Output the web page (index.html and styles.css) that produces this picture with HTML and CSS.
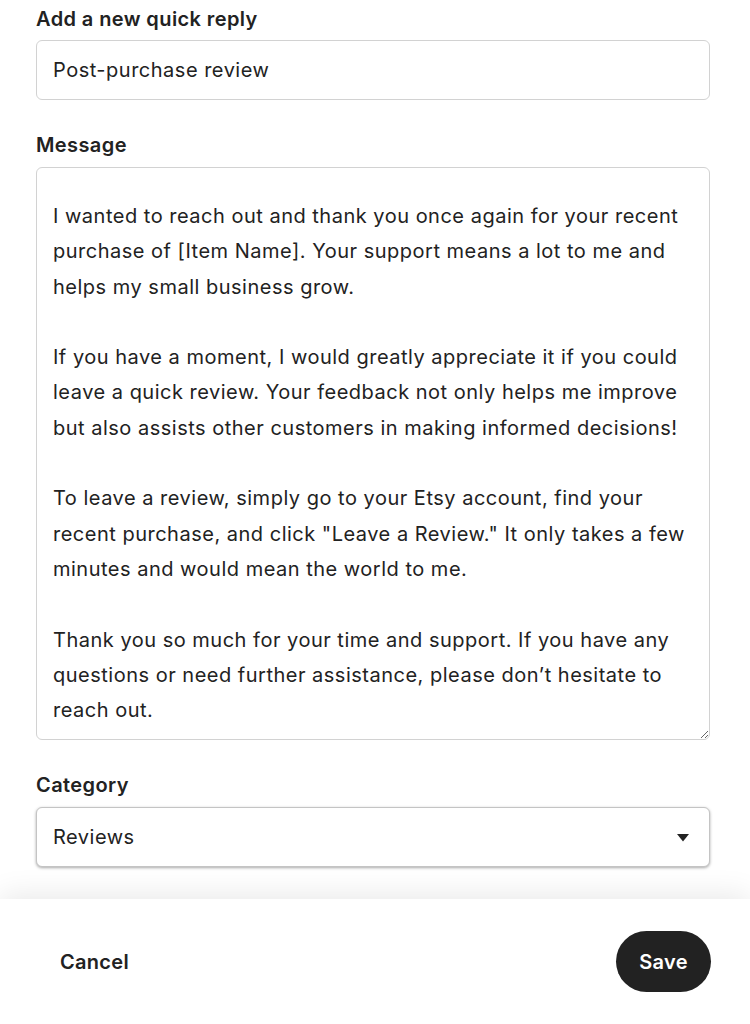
FILE: index.html
```html
<!DOCTYPE html>
<html lang="en">
<head>
<meta charset="utf-8">
<title>Add a new quick reply</title>
<link rel="stylesheet" href="styles.css">
</head>
<body>
<main class="form">
  <label class="label" for="title">Add a new quick reply</label>
  <input class="field" id="title" type="text" value="Post-purchase review">

  <label class="label label-gap" for="msg">Message</label>
  <textarea class="field area" id="msg">I wanted to reach out and thank you once again for your recent purchase of [Item Name]. Your support means a lot to me and helps my small business grow.

If you have a moment, I would greatly appreciate it if you could leave a quick review. Your feedback not only helps me improve but also assists other customers in making informed decisions!

To leave a review, simply go to your Etsy account, find your recent purchase, and click "Leave a Review." It only takes a few minutes and would mean the world to me.

Thank you so much for your time and support. If you have any questions or need further assistance, please don’t hesitate to reach out.</textarea>

  <label class="label label-gap" for="cat">Category</label>
  <div class="select-wrap">
    <select class="field select" id="cat">
      <option>Reviews</option>
    </select>
    <svg class="caret" width="12" height="8" viewBox="0 0 12 8" aria-hidden="true"><path d="M0 0h12L6 7.5z" fill="#222"/></svg>
  </div>
</main>
<footer class="footer">
  <button class="btn btn-text" type="button">Cancel</button>
  <button class="btn btn-primary" type="button">Save</button>
</footer>
</body>
</html>
```
FILE: styles.css
```css
* { box-sizing: border-box; }
html, body { margin: 0; padding: 0; background: #fff; }
body {
  font-family: Inter, "Noto Sans", Arial, sans-serif;
  color: #222;
  width: 750px;
  height: 1024px;
  display: flex;
  flex-direction: column;
  overflow: hidden;
}
.form {
  flex: 1;
  display: flex;
  flex-direction: column;
  padding: 7px 40px 0 36px;
}
.label {
  display: block;
  font-size: 20px;
  line-height: 24px;
  font-weight: 600;
  letter-spacing: 0.4px;
  margin-bottom: 9px;
}
.label-gap { margin-top: 33px; margin-bottom: 10px; }
.field {
  font-family: inherit;
  font-size: 20px;
  letter-spacing: 0.5px;
  color: #222;
  width: 100%;
  background: #fff;
  border: 1px solid #d2d2d2;
  border-radius: 6px;
  outline: none;
}
input.field {
  height: 60px;
  padding: 0 16px;
}
.area {
  height: 573px;
  padding: 31px 16px 12px;
  line-height: 35.3px;
  resize: vertical;
  overflow: hidden;
}
.select-wrap { position: relative; }
.select {
  appearance: none;
  -webkit-appearance: none;
  height: 60px;
  padding: 0 16px;
  border-color: #c4c4c4;
  box-shadow: 0 1px 3px rgba(0,0,0,0.34);
}
.caret {
  position: absolute;
  right: 21px;
  top: 27px;
}
.footer {
  height: 125px;
  flex: none;
  display: flex;
  align-items: center;
  justify-content: space-between;
  padding: 0 39px 0 36px;
  background: #fff;
  box-shadow: 0 -4px 28px rgba(0,0,0,0.09);
}
.btn {
  font-family: inherit;
  font-size: 20px;
  font-weight: 600;
  letter-spacing: 0.3px;
  border: none;
  cursor: pointer;
}
.btn-text {
  background: transparent;
  color: #222;
  padding: 0 24px;
  height: 60px;
}
.btn-primary {
  background: #222;
  color: #fff;
  height: 61px;
  width: 95px;
  border-radius: 31px;
  padding: 0;
}
```
